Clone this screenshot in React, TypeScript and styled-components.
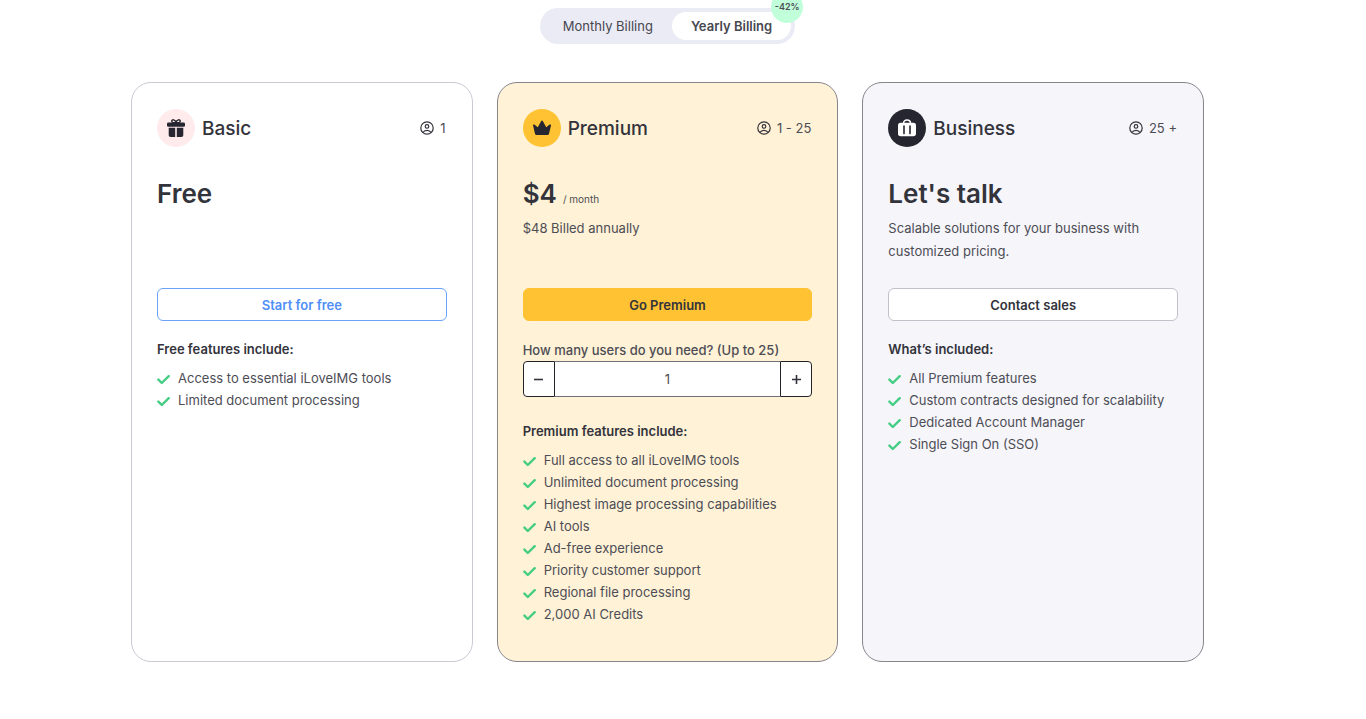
import React, { useState } from 'react';
import styled, { createGlobalStyle } from 'styled-components';

const GlobalStyle = createGlobalStyle`
  *, *::before, *::after { box-sizing: border-box; }
  body {
    margin: 0;
    background: #fff;
    color: #4d4d55;
    font-family: Inter, "Liberation Sans", sans-serif;
    font-size: 13px;
  }
  h2, p, ul { margin: 0; padding: 0; }
  button, input { font: inherit; }
`;

const Page = styled.main`
  display: flex;
  flex-direction: column;
  align-items: center;
  gap: 38px;
  padding: 8px 31px 57px 0;
`;

const Toggle = styled.div`
  position: relative;
  display: flex;
  height: 36px;
  padding: 4px;
  border-radius: 18px;
  background: #ebebf5;
`;

const ToggleButton = styled.button<{ $active: boolean }>`
  height: 28px;
  padding: 0 19px;
  border: 0;
  border-radius: 14px;
  background: ${(p) => (p.$active ? '#fff' : 'transparent')};
  color: #47474f;
  font-weight: ${(p) => (p.$active ? 600 : 400)};
  cursor: pointer;
`;

const Badge = styled.span`
  position: absolute;
  top: -17px;
  right: -8px;
  width: 32px;
  height: 32px;
  border-radius: 50%;
  background: #c1ffdb;
  font-size: 9px;
  font-weight: 600;
  line-height: 32px;
  text-align: center;
`;

const Plans = styled.div`
  display: grid;
  grid-template-columns: repeat(3, 1fr);
  gap: 24px;
  width: 100%;
  max-width: 1073px;
`;

const Card = styled.section<{ $bg: string; $border: string }>`
  display: flex;
  flex-direction: column;
  padding: 26px 25px 36px;
  border: 1px solid ${(p) => p.$border};
  border-radius: 20px;
  background: ${(p) => p.$bg};
`;

const CardHeader = styled.header`
  display: flex;
  align-items: center;
  height: 38px;
`;

const IconCircle = styled.span<{ $bg: string }>`
  display: flex;
  align-items: center;
  justify-content: center;
  width: 38px;
  height: 38px;
  margin-right: 7px;
  border-radius: 50%;
  background: ${(p) => p.$bg};
`;

const PlanName = styled.h2`
  flex: 1;
  color: #33333b;
  font-size: 19px;
  font-weight: 500;
`;

const Users = styled.span`
  display: flex;
  align-items: center;
  gap: 6px;
  padding-right: 1px;
`;

const PriceBlock = styled.div`
  min-height: 112px;
  margin-top: 29px;
`;

const Price = styled.p`
  display: flex;
  align-items: baseline;
  gap: 6px;
  height: 36px;
  color: #33333b;
  font-size: 26px;
  font-weight: 600;
  line-height: 36px;
`;

const Period = styled.small`
  color: #4d4d55;
  font-size: 10px;
  font-weight: 400;
`;

const Note = styled.p`
  padding-top: 5px;
  line-height: 23px;
`;

const Action = styled.button<{ $bg: string; $border: string; $color: string }>`
  height: 33px;
  border: 1px solid ${(p) => p.$border};
  border-radius: 6px;
  background: ${(p) => p.$bg};
  color: ${(p) => p.$color};
  font-weight: 600;
  cursor: pointer;
`;

const StepperField = styled.div`
  margin: 18px 0 6px;
`;

const StepperLabel = styled.label`
  display: block;
  font-weight: 500;
  line-height: 22px;
`;

const Stepper = styled.div`
  display: flex;
  height: 36px;
`;

const StepButton = styled.button<{ $side: 'left' | 'right' }>`
  display: flex;
  align-items: center;
  justify-content: center;
  width: 32px;
  padding: 0;
  border: 1px solid #222229;
  border-radius: ${(p) => (p.$side === 'left' ? '4px 0 0 4px' : '0 4px 4px 0')};
  background: #fff;
  cursor: pointer;
`;

const StepInput = styled.input`
  flex: 1;
  min-width: 0;
  padding: 0;
  border: solid #707078;
  border-width: 1px 0;
  background: #fff;
  color: #4d4d55;
  text-align: center;
`;

const FeatureTitle = styled.p`
  margin-top: 18px;
  color: #33333b;
  font-weight: 600;
  line-height: 20px;
`;

const FeatureList = styled.ul`
  margin-top: 8px;
  list-style: none;
`;

const Feature = styled.li`
  display: flex;
  align-items: center;
  gap: 8px;
  line-height: 22px;
  white-space: nowrap;
`;

const CheckIcon = () => (
  <svg width="13" height="14" viewBox="0 0 13 14" fill="none" stroke="#45cd84" strokeWidth="2.4" strokeLinecap="round" strokeLinejoin="round" aria-hidden="true">
    <path d="M1.400 8.600 4.800 12 11.700 5.200" />
  </svg>
);

const UserIcon = () => (
  <svg width="14" height="14" viewBox="0 0 14 14" fill="none" stroke="#33333b" strokeWidth="1.2" aria-hidden="true">
    <circle cx="7" cy="7" r="6.2" />
    <circle cx="7" cy="5.4" r="1.8" />
    <path d="M2.9 11.5C3.8 9.9 5.2 9.3 7 9.3s3.2.6 4.1 2.2" />
  </svg>
);

const GiftIcon = () => (
  <svg width="20" height="20" viewBox="0 0 20 20" fill="#262630" aria-hidden="true">
    <rect x="1" y="4.4" width="18" height="4.4" rx="1.4" />
    <path d="M2.7 9.8h6.5V19H4.5a1.8 1.8 0 0 1-1.8-1.8zM10.8 9.8h6.5v7.4a1.8 1.8 0 0 1-1.8 1.8h-4.7z" />
    <path d="M10 4.8C8.8 4.8 5.7 4.9 5.7 3.2c0-2 3.7-2.1 4.3 1.6.6-3.7 4.3-3.6 4.3-1.6 0 1.7-3.1 1.6-4.3 1.6z" fill="none" stroke="#262630" strokeWidth="1.4" />
  </svg>
);

const CrownIcon = () => (
  <svg width="20" height="20" viewBox="0 0 20 20" fill="#262630" aria-hidden="true">
    <path d="M1 7.2a.8.8 0 0 1 1.3-.6l3.5 2.7L9.2 3a.9.9 0 0 1 1.6 0l3.4 6.3 3.5-2.7a.8.8 0 0 1 1.3.8l-2 8.4a1.5 1.5 0 0 1-1.5 1.2h-11A1.5 1.5 0 0 1 3 15.8z" />
  </svg>
);

const CaseIcon = () => (
  <svg width="20" height="20" viewBox="0 0 20 20" fill="none" aria-hidden="true">
    <path d="M6.5 5.5C6.5 3.2 7.7 2.1 10 2.1s3.5 1.1 3.5 3.4" stroke="#fff" strokeWidth="1.5" />
    <rect x="1" y="4.8" width="18" height="13.4" rx="2.6" fill="#fff" />
    <path d="M7 8v7.6M13 8v7.6" stroke="#262630" strokeWidth="1.6" strokeLinecap="round" />
  </svg>
);

const MinusIcon = () => (
  <svg width="11" height="11" viewBox="0 0 11 11" stroke="#33333b" strokeWidth="1.6" aria-hidden="true">
    <path d="M1 5.5h9" />
  </svg>
);

const PlusIcon = () => (
  <svg width="11" height="11" viewBox="0 0 11 11" stroke="#33333b" strokeWidth="1.6" aria-hidden="true">
    <path d="M1 5.5h9M5.5 1v9" />
  </svg>
);

const Features = ({ title, items }: { title: string; items: string[] }) => (
  <>
    <FeatureTitle>{title}</FeatureTitle>
    <FeatureList>
      {items.map((item) => (
        <Feature key={item}>
          <CheckIcon />
          {item}
        </Feature>
      ))}
    </FeatureList>
  </>
);

type HeadProps = { icon: React.ReactNode; circle: string; name: string; users: string };

const PlanHead = ({ icon, circle, name, users }: HeadProps) => (
  <CardHeader>
    <IconCircle $bg={circle}>{icon}</IconCircle>
    <PlanName>{name}</PlanName>
    <Users>
      <UserIcon />
      {users}
    </Users>
  </CardHeader>
);

export default function App() {
  const [yearly, setYearly] = useState(true);
  const [count, setCount] = useState(1);
  const change = (n: number) => setCount(Math.min(25, Math.max(1, n || 1)));

  return (
    <>
      <GlobalStyle />
      <Page>
        <Toggle>
          <ToggleButton type="button" $active={!yearly} onClick={() => setYearly(false)}>
            Monthly Billing
          </ToggleButton>
          <ToggleButton type="button" $active={yearly} onClick={() => setYearly(true)}>
            Yearly Billing
          </ToggleButton>
          <Badge>-42%</Badge>
        </Toggle>
        <Plans>
          <Card $bg="#fff" $border="#c9c9d4">
            <PlanHead icon={<GiftIcon />} circle="#ffebec" name="Basic" users="1" />
            <PriceBlock>
              <Price>Free</Price>
            </PriceBlock>
            <Action type="button" $bg="#fff" $border="#6ba3fb" $color="#4f8ff7">
              Start for free
            </Action>
            <Features
              title="Free features include:"
              items={['Access to essential iLoveIMG tools', 'Limited document processing']}
            />
          </Card>
          <Card $bg="#fff2d6" $border="#85858c">
            <PlanHead icon={<CrownIcon />} circle="#ffc233" name="Premium" users="1 - 25" />
            <PriceBlock>
              <Price>
                $4 <Period>/ month</Period>
              </Price>
              <Note>$48 Billed annually</Note>
            </PriceBlock>
            <Action type="button" $bg="#ffc233" $border="#ffc233" $color="#33333b">
              Go Premium
            </Action>
            <StepperField>
              <StepperLabel htmlFor="users">How many users do you need? (Up to 25)</StepperLabel>
              <Stepper>
                <StepButton type="button" $side="left" aria-label="Fewer users" onClick={() => change(count - 1)}>
                  <MinusIcon />
                </StepButton>
                <StepInput id="users" value={count} onChange={(e) => change(Number(e.target.value))} />
                <StepButton type="button" $side="right" aria-label="More users" onClick={() => change(count + 1)}>
                  <PlusIcon />
                </StepButton>
              </Stepper>
            </StepperField>
            <Features
              title="Premium features include:"
              items={[
                'Full access to all iLoveIMG tools',
                'Unlimited document processing',
                'Highest image processing capabilities',
                'AI tools',
                'Ad-free experience',
                'Priority customer support',
                'Regional file processing',
                '2,000 AI Credits',
              ]}
            />
          </Card>
          <Card $bg="#f5f5fa" $border="#85858c">
            <PlanHead icon={<CaseIcon />} circle="#262630" name="Business" users="25 +" />
            <PriceBlock>
              <Price>Let's talk</Price>
              <Note>Scalable solutions for your business with customized pricing.</Note>
            </PriceBlock>
            <Action type="button" $bg="#fff" $border="#c1c1cc" $color="#33333b">
              Contact sales
            </Action>
            <Features
              title="What’s included:"
              items={[
                'All Premium features',
                'Custom contracts designed for scalability',
                'Dedicated Account Manager',
                'Single Sign On (SSO)',
              ]}
            />
          </Card>
        </Plans>
      </Page>
    </>
  );
}
